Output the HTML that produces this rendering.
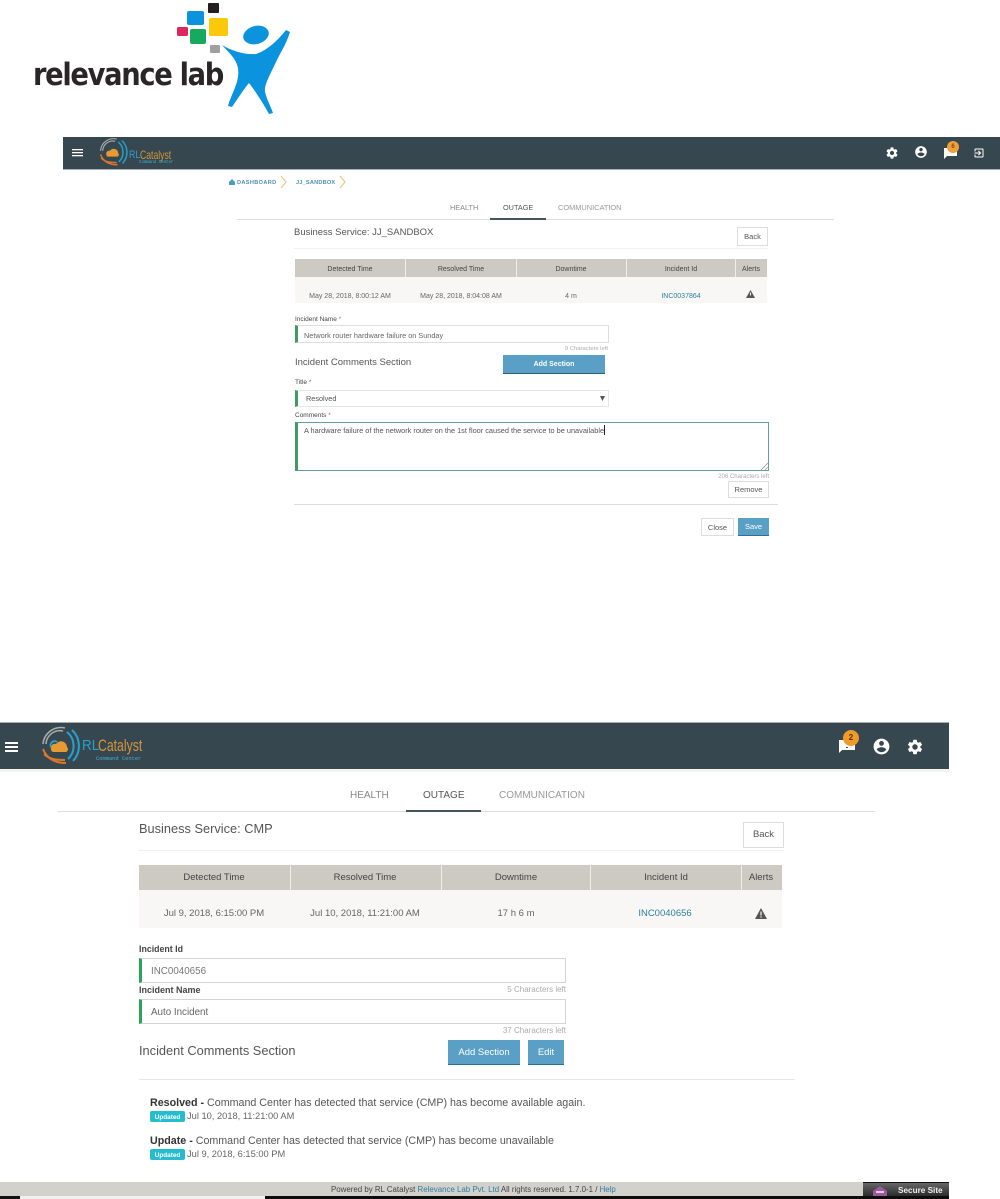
<!DOCTYPE html>
<html lang="en">
<head>
<meta charset="utf-8">
<title>RL Catalyst Outage</title>
<style>
html,body{margin:0;padding:0;background:#fff}
body{position:relative;width:1000px;height:1199px;overflow:hidden;font-family:"Liberation Sans",sans-serif;color:#555;filter:blur(.3px)}
.b{position:absolute;box-sizing:border-box}
.t{position:absolute;white-space:nowrap;line-height:0;margin-top:4px}
.c{transform:translateX(-50%)}
svg{position:absolute;overflow:visible}
.btn{position:absolute;box-sizing:border-box;background:#fff;border:1px solid #ddd;text-align:center;color:#555}
.pri{position:absolute;box-sizing:border-box;background:#5a9fc5;color:#fff;text-align:center;border-bottom:1px solid #2f6f92}
b{font-weight:bold}
</style>
</head>
<body>
<svg width="1000" height="130" style="left:0;top:0" viewBox="0 0 1000 130">
<rect x="208" y="3" width="11" height="10" rx="1" fill="#231f20"/>
<rect x="187" y="11" width="17" height="14" rx="2" fill="#0b93de"/>
<rect x="209" y="18" width="19" height="18" rx="2" fill="#fcc80a"/>
<rect x="177" y="27" width="11" height="9" rx="1.5" fill="#e0265f"/>
<rect x="190" y="29" width="16" height="15" rx="2" fill="#17aa5e"/>
<rect x="210" y="45" width="10" height="8" rx="1" fill="#a0a0a0"/>
<ellipse cx="256" cy="35" rx="13" ry="9" transform="rotate(-15 256 35)" fill="#0b93de"/>
<path d="M222 45C232 51 245 55 256 54C268 50 278 40 286 30L290 32C286 45 280 53 276 62C270 75 264 85 265 92C267 100 271 107 273 113L269 114C263 103 256 92 249 83C243 90 237 100 232 107L228 106C232 92 240 82 238 68C236 58 228 52 222 45Z" fill="#0b93de"/>
<text x="33" y="85" font-family="DejaVu Sans" font-weight="bold" font-size="31" letter-spacing="-1.5" textLength="190" lengthAdjust="spacingAndGlyphs" fill="#2a2627">relevance lab</text>
</svg>

<!-- first bar -->
<div class="b" style="left:63px;top:137px;width:937px;height:33px;background:#37474f;border-bottom:1px solid #a8adb0"></div>
<svg width="11" height="8" viewBox="0 0 11 8" style="left:72px;top:148.7px" fill="#fff"><rect y="0" width="11" height="1.3"/><rect y="3" width="11" height="1.3"/><rect y="6" width="11" height="1.3"/></svg>
<svg width="28" height="30" style="left:99px;top:138px" viewBox="0 0 38 40" fill="none">
<path d="M5 17A14 14 0 0 1 22 4" stroke="#a9adb0" stroke-width="1.5"/><path d="M2 17A18 18 0 0 1 24 1" stroke="#a9adb0" stroke-width="1.5"/>
<path d="M26 5A18 18 0 0 1 27 32" stroke="#2b9fcb" stroke-width="2"/><path d="M31 3A22 22 0 0 1 32 34" stroke="#2b9fcb" stroke-width="2"/>
<path d="M2 22C6 32 14 36 25 36" stroke="#d9772d" stroke-width="2"/><path d="M3 27C8 32 14 33 24 33" stroke="#d9772d" stroke-width="2"/>
<path d="M10 22a4 4 0 0 1 5-5a6 6 0 0 1 11 3a3 3 0 0 1-1 5H12a3 3 0 0 1-2-3z" fill="#e69a32"/>
</svg>
<div class="t" style="left:129px;top:151px;font-size:11px;color:#2b9fcb;transform-origin:left;transform:scaleX(.8)">RL</div>
<div class="t" style="left:140px;top:151px;font-size:12px;color:#d3963c;transform-origin:left;transform:scaleX(.72)">Catalyst</div>
<div class="t" style="left:139px;top:159px;font-size:4.1px;color:#3fb0d0;font-family:'Liberation Mono',monospace">Command Center</div>

<svg width="14" height="14" viewBox="0 0 24 24" style="left:885px;top:146px" fill="#fff"><path d="M19.14 12.94c.04-.3.06-.61.06-.94 0-.32-.02-.64-.07-.94l2.03-1.58c.18-.14.23-.41.12-.61l-1.92-3.32c-.12-.22-.37-.29-.59-.22l-2.39.96c-.5-.38-1.03-.7-1.62-.94l-.36-2.54c-.04-.24-.24-.41-.48-.41h-3.84c-.24 0-.43.17-.47.41l-.36 2.54c-.59.24-1.13.57-1.62.94l-2.39-.96c-.22-.08-.47 0-.59.22L2.74 8.87c-.12.21-.08.47.12.61l2.03 1.58c-.05.3-.09.63-.09.94s.02.64.07.94l-2.03 1.58c-.18.14-.23.41-.12.61l1.92 3.32c.12.22.37.29.59.22l2.39-.96c.5.38 1.03.7 1.62.94l.36 2.54c.05.24.24.41.48.41h3.84c.24 0 .44-.17.47-.41l.36-2.54c.59-.24 1.13-.56 1.62-.94l2.39.96c.22.08.47 0 .59-.22l1.92-3.32c.12-.22.07-.47-.12-.61l-2.01-1.58zM12 15.6c-1.98 0-3.6-1.62-3.6-3.6s1.62-3.6 3.6-3.6 3.6 1.62 3.6 3.6-1.62 3.6-3.6 3.6z"/></svg>
<svg width="14" height="14" viewBox="0 0 24 24" style="left:914px;top:145px" fill="#fff"><path d="M12 2C6.48 2 2 6.48 2 12s4.48 10 10 10 10-4.48 10-10S17.52 2 12 2zm0 3c1.66 0 3 1.34 3 3s-1.34 3-3 3-3-1.34-3-3 1.34-3 3-3zm0 14.2c-2.5 0-4.71-1.28-6-3.22.03-1.99 4-3.08 6-3.08 1.99 0 5.97 1.09 6 3.08-1.29 1.94-3.5 3.22-6 3.22z"/></svg>
<svg width="14" height="13" viewBox="0 0 14 13" style="left:944px;top:147px"><path d="M0 1H13V9H3L0 12Z" fill="#fff"/></svg>
<div class="b" style="left:947px;top:141px;width:12px;height:12px;border-radius:50%;background:#f0a03a"></div>
<div class="t c" style="left:953px;top:143px;font-size:6px;color:#7a4a10;font-weight:bold">6</div>
<svg width="12" height="12" viewBox="0 0 24 24" style="left:973px;top:147px" fill="#fff"><path d="M10.09 15.59L11.5 17l5-5-5-5-1.41 1.41L12.67 11H3v2h9.67l-2.58 2.59zM19 3H5c-1.11 0-2 .9-2 2v4h2V5h14v14H5v-4H3v4c0 1.1.89 2 2 2h14c1.1 0 2-.9 2-2V5c0-1.1-.9-2-2-2z"/></svg>

<!-- breadcrumb -->
<svg width="6" height="6" viewBox="0 0 8 8" style="left:229px;top:179px"><path d="M0 4L4 0L8 4V8H0Z" fill="#4b9cc4"/></svg>
<div class="t" style="left:237px;top:179px;font-size:5.6px;font-weight:bold;color:#4b8fb5;letter-spacing:.35px">DASHBOARD</div>
<svg width="7" height="12" viewBox="0 0 7 12" style="left:280px;top:176px" fill="none"><path d="M1 0L6 6L1 12" stroke="#e7c98a" stroke-width="1.2"/></svg>
<div class="t" style="left:296px;top:179px;font-size:5.6px;font-weight:bold;color:#4b8fb5;letter-spacing:.2px">JJ_SANDBOX</div>
<svg width="7" height="12" viewBox="0 0 7 12" style="left:339px;top:176px" fill="none"><path d="M1 0L6 6L1 12" stroke="#e7c98a" stroke-width="1.2"/></svg>

<!-- tabs 1 -->
<div class="t" style="left:450px;top:204px;font-size:7.3px;color:#888">HEALTH</div>
<div class="t" style="left:503px;top:204px;font-size:7.3px;color:#555">OUTAGE</div>
<div class="t" style="left:558px;top:204px;font-size:7.4px;color:#999">COMMUNICATION</div>
<div class="b" style="left:237px;top:219px;width:597px;height:1px;background:#ddd"></div>
<div class="b" style="left:490px;top:218px;width:56px;height:2px;background:#46555c"></div>

<div class="t" style="left:294px;top:229px;font-size:9.5px;color:#555">Business Service: JJ_SANDBOX</div>
<div class="btn" style="left:737px;top:227px;width:31px;height:19px;font-size:7.5px;line-height:18px">Back</div>
<div class="b" style="left:294px;top:248px;width:474px;height:1px;background:#f0f0f0"></div>

<div class="b" style="left:295px;top:259px;width:472px;height:18px;background:#cdcac3"></div>
<div class="b" style="left:405px;top:259px;width:1px;height:18px;background:#eee"></div>
<div class="b" style="left:516px;top:259px;width:1px;height:18px;background:#eee"></div>
<div class="b" style="left:626px;top:259px;width:1px;height:18px;background:#eee"></div>
<div class="b" style="left:735px;top:259px;width:1px;height:18px;background:#eee"></div>
<div class="b" style="left:295px;top:277px;width:472px;height:26px;background:#f8f7f5"></div>
<div class="t c" style="left:350px;top:266px;font-size:7px;color:#444">Detected Time</div>
<div class="t c" style="left:461px;top:266px;font-size:7px;color:#444">Resolved Time</div>
<div class="t c" style="left:571px;top:266px;font-size:7px;color:#444">Downtime</div>
<div class="t c" style="left:681px;top:266px;font-size:7px;color:#444">Incident Id</div>
<div class="t c" style="left:751px;top:266px;font-size:7px;color:#444">Alerts</div>
<div class="t c" style="left:350px;top:293px;font-size:7px;color:#666">May 28, 2018, 8:00:12 AM</div>
<div class="t c" style="left:461px;top:293px;font-size:7px;color:#666">May 28, 2018, 8:04:08 AM</div>
<div class="t c" style="left:571px;top:293px;font-size:7px;color:#666">4 m</div>
<div class="t c" style="left:681px;top:293px;font-size:7px;color:#2f7f9f">INC0037864</div>
<svg width="9" height="8" viewBox="0 0 9 8" style="left:746px;top:290px"><path d="M4.5 0L9 8H0Z" fill="#555"/><rect x="4" y="2.5" width="1" height="3" fill="#f8f7f5"/></svg>

<div class="t" style="left:295px;top:316px;font-size:6.5px;color:#444">Incident Name <span style="color:#c55">*</span></div>
<div class="b" style="left:295px;top:325px;width:314px;height:18px;border:1px solid #ddd;border-left:3px solid #3f9a63"></div>
<div class="t" style="left:304px;top:332px;font-size:7.3px;color:#666">Network router hardware failure on Sunday</div>
<div class="t" style="right:392px;top:345px;font-size:5.9px;color:#aaa">9 Characters left</div>
<div class="t" style="left:295px;top:359px;font-size:9.5px;color:#555">Incident Comments Section</div>
<div class="pri" style="left:503px;top:355px;width:102px;height:19px;font-size:7px;line-height:19px;font-weight:bold;border-bottom-color:#2f5f7a">Add Section</div>

<div class="t" style="left:295px;top:379px;font-size:6.5px;color:#444">Title <span style="color:#c55">*</span></div>
<div class="b" style="left:295px;top:390px;width:314px;height:17px;border:1px solid #e5e5e5;border-left:3px solid #3f9a63"></div>
<div class="t" style="left:306px;top:395px;font-size:7.3px;color:#555">Resolved</div>
<svg width="5" height="5" viewBox="0 0 5 5" style="left:600px;top:396px"><path d="M0 0H5L2.5 5Z" fill="#555"/></svg>
<div class="t" style="left:295px;top:412px;font-size:6.5px;color:#444">Comments <span style="color:#c55">*</span></div>
<div class="b" style="left:295px;top:422px;width:474px;height:49px;border:1px solid #5f9f9f;border-left:3px solid #3f9a63"></div>
<div class="t" style="left:304px;top:427px;font-size:7.35px;color:#555">A hardware failure of the network router on the 1st floor caused the service to be unavailable</div>
<div class="b" style="left:604px;top:425px;width:1px;height:10px;background:#222"></div>
<svg width="7" height="7" viewBox="0 0 7 7" style="left:761px;top:463px" fill="none"><path d="M0 7L7 0M4 7L7 4" stroke="#888" stroke-width=".7"/></svg>
<div class="t" style="right:231px;top:473px;font-size:6px;color:#aaa">206 Characters left</div>
<div class="btn" style="left:728px;top:481px;width:41px;height:17px;font-size:7.5px;line-height:16px">Remove</div>
<div class="b" style="left:294px;top:504px;width:484px;height:1px;background:#ddd"></div>
<div class="btn" style="left:701px;top:518px;width:33px;height:18px;font-size:7.5px;line-height:17px">Close</div>
<div class="pri" style="left:738px;top:518px;width:31px;height:18px;font-size:7.5px;line-height:18px">Save</div>

<!-- second bar -->
<div class="b" style="left:0;top:722px;width:949px;height:47px;background:#37474f;border-top:1px solid #a5abae"></div>
<div class="b" style="left:0;top:769px;width:949px;height:3px;background:#f6f4f1"></div>
<div class="b" style="left:5px;top:742px;width:13px;height:1.5px;background:#fff"></div>
<div class="b" style="left:5px;top:746px;width:13px;height:1.5px;background:#fff"></div>
<div class="b" style="left:5px;top:750px;width:13px;height:1.5px;background:#fff"></div>
<svg width="38" height="40" style="left:41px;top:727px" viewBox="0 0 38 40" fill="none">
<path d="M5 17A14 14 0 0 1 22 4" stroke="#a9adb0" stroke-width="1.5"/><path d="M2 17A18 18 0 0 1 24 1" stroke="#a9adb0" stroke-width="1.5"/>
<path d="M26 5A18 18 0 0 1 27 32" stroke="#2b9fcb" stroke-width="2"/><path d="M31 3A22 22 0 0 1 32 34" stroke="#2b9fcb" stroke-width="2"/>
<path d="M2 22C6 32 14 36 25 36" stroke="#d9772d" stroke-width="2"/><path d="M3 27C8 32 14 33 24 33" stroke="#d9772d" stroke-width="2"/>
<path d="M10 22a4 4 0 0 1 5-5a6 6 0 0 1 11 3a3 3 0 0 1-1 5H12a3 3 0 0 1-2-3z" fill="#e69a32"/>
<path d="M10 20a4 4 0 0 1 6-5" stroke="#2b9fcb" stroke-width="2"/>
</svg>
<div class="t" style="left:82px;top:742px;font-size:15px;color:#2b9fcb;transform-origin:left;transform:scaleX(.9)">RL</div>
<div class="t" style="left:98px;top:742px;font-size:17px;color:#d3963c;transform-origin:left;transform:scaleX(.72)">Catalyst</div>
<div class="t" style="left:96px;top:755px;font-size:5.4px;color:#3fb0d0;font-family:'Liberation Mono',monospace">Command Center</div>

<svg width="16" height="15" viewBox="0 0 16 15" style="left:839px;top:739px"><path d="M0 1H16V11H3L0 14Z" fill="#fff"/><rect x="7" y="8" width="2" height="1" fill="#37474f"/></svg>
<div class="b" style="left:843px;top:730px;width:16px;height:16px;border-radius:50%;background:#f09a2a"></div>
<div class="t c" style="left:851px;top:734px;font-size:8px;color:#5a3308;font-weight:bold">2</div>
<svg width="19" height="19" viewBox="0 0 24 24" style="left:871.5px;top:737px" fill="#fff"><path d="M12 2C6.48 2 2 6.48 2 12s4.48 10 10 10 10-4.48 10-10S17.52 2 12 2zm0 3c1.66 0 3 1.34 3 3s-1.34 3-3 3-3-1.34-3-3 1.34-3 3-3zm0 14.2c-2.5 0-4.71-1.28-6-3.22.03-1.99 4-3.08 6-3.08 1.99 0 5.97 1.09 6 3.08-1.29 1.94-3.5 3.22-6 3.22z"/></svg>
<svg width="18" height="18" viewBox="0 0 24 24" style="left:906px;top:737.5px" fill="#fff"><path d="M19.14 12.94c.04-.3.06-.61.06-.94 0-.32-.02-.64-.07-.94l2.03-1.58c.18-.14.23-.41.12-.61l-1.92-3.32c-.12-.22-.37-.29-.59-.22l-2.39.96c-.5-.38-1.03-.7-1.62-.94l-.36-2.54c-.04-.24-.24-.41-.48-.41h-3.84c-.24 0-.43.17-.47.41l-.36 2.54c-.59.24-1.13.57-1.62.94l-2.39-.96c-.22-.08-.47 0-.59.22L2.74 8.87c-.12.21-.08.47.12.61l2.03 1.58c-.05.3-.09.63-.09.94s.02.64.07.94l-2.03 1.58c-.18.14-.23.41-.12.61l1.92 3.32c.12.22.37.29.59.22l2.39-.96c.5.38 1.03.7 1.62.94l.36 2.54c.05.24.24.41.48.41h3.84c.24 0 .44-.17.47-.41l.36-2.54c.59-.24 1.13-.56 1.62-.94l2.39.96c.22.08.47 0 .59-.22l1.92-3.32c.12-.22.07-.47-.12-.61l-2.01-1.58zM12 15.6c-1.98 0-3.6-1.62-3.6-3.6s1.62-3.6 3.6-3.6 3.6 1.62 3.6 3.6-1.62 3.6-3.6 3.6z"/></svg>

<!-- tabs 2 -->
<div class="t" style="left:350px;top:792px;font-size:10px;color:#888">HEALTH</div>
<div class="t" style="left:423px;top:792px;font-size:10px;color:#555">OUTAGE</div>
<div class="t" style="left:499px;top:792px;font-size:10px;color:#999">COMMUNICATION</div>
<div class="b" style="left:58px;top:811px;width:817px;height:1px;background:#ddd"></div>
<div class="b" style="left:406px;top:810px;width:75px;height:2px;background:#46555c"></div>

<div class="t" style="left:139px;top:825px;font-size:12.8px;color:#555">Business Service: CMP</div>
<div class="btn" style="left:743px;top:822px;width:41px;height:26px;font-size:9.5px;line-height:24px">Back</div>
<div class="b" style="left:138px;top:850px;width:646px;height:1px;background:#f0f0f0"></div>

<div class="b" style="left:139px;top:865px;width:643px;height:25px;background:#cdcac3"></div>
<div class="b" style="left:290px;top:865px;width:1px;height:25px;background:#eee"></div>
<div class="b" style="left:441px;top:865px;width:1px;height:25px;background:#eee"></div>
<div class="b" style="left:590px;top:865px;width:1px;height:25px;background:#eee"></div>
<div class="b" style="left:741px;top:865px;width:1px;height:25px;background:#eee"></div>
<div class="b" style="left:139px;top:890px;width:643px;height:38px;background:#f8f7f5"></div>
<div class="t c" style="left:214px;top:874px;font-size:9.5px;color:#444">Detected Time</div>
<div class="t c" style="left:365px;top:874px;font-size:9.5px;color:#444">Resolved Time</div>
<div class="t c" style="left:516px;top:874px;font-size:9.5px;color:#444">Downtime</div>
<div class="t c" style="left:666px;top:874px;font-size:9.5px;color:#444">Incident Id</div>
<div class="t c" style="left:761px;top:874px;font-size:9.5px;color:#444">Alerts</div>
<div class="t c" style="left:214px;top:910px;font-size:9.5px;color:#666">Jul 9, 2018, 6:15:00 PM</div>
<div class="t c" style="left:365px;top:910px;font-size:9.5px;color:#666">Jul 10, 2018, 11:21:00 AM</div>
<div class="t c" style="left:516px;top:910px;font-size:9.5px;color:#666">17 h 6 m</div>
<div class="t c" style="left:665px;top:910px;font-size:9.5px;color:#2f7f9f">INC0040656</div>
<svg width="12" height="11" viewBox="0 0 12 11" style="left:755px;top:908px"><path d="M6 0L12 11H0Z" fill="#555"/><rect x="5.4" y="3.5" width="1.2" height="4" fill="#f8f7f5"/><rect x="5.4" y="8.4" width="1.2" height="1.2" fill="#f8f7f5"/></svg>

<div class="t" style="left:139px;top:945px;font-size:8.8px;color:#444;font-weight:bold">Incident Id</div>
<div class="b" style="left:139px;top:958px;width:427px;height:25px;border:1px solid #d5d5d5;border-left:3.5px solid #2ea25c"></div>
<div class="t" style="left:151px;top:968px;font-size:9.8px;color:#777">INC0040656</div>
<div class="t" style="left:139px;top:986px;font-size:9px;color:#444;font-weight:bold">Incident Name</div>
<div class="t" style="right:434px;top:986px;font-size:8px;color:#aaa">5 Characters left</div>
<div class="b" style="left:139px;top:999px;width:427px;height:25px;border:1px solid #d5d5d5;border-left:3.5px solid #2ea25c"></div>
<div class="t" style="left:151px;top:1009px;font-size:9.8px;color:#666">Auto Incident</div>
<div class="t" style="right:434px;top:1027px;font-size:8px;color:#aaa">37 Characters left</div>
<div class="t" style="left:139px;top:1047px;font-size:12.8px;color:#555">Incident Comments Section</div>
<div class="pri" style="left:448px;top:1040px;width:72px;height:25px;font-size:9.5px;line-height:25px">Add Section</div>
<div class="pri" style="left:528px;top:1040px;width:36px;height:25px;font-size:9.5px;line-height:25px">Edit</div>
<div class="b" style="left:139px;top:1079px;width:656px;height:1px;background:#e6e6e6"></div>

<div class="t" style="left:150px;top:1099px;font-size:10.7px;color:#555"><b style="color:#333">Resolved -</b> Command Center has detected that service (CMP) has become available again.</div>
<div class="b" style="left:150px;top:1111px;width:35px;height:11px;background:#25bcd0;border-radius:2px"></div>
<div class="t c" style="left:167.5px;top:1114px;font-size:6.4px;color:#fff;font-weight:bold">Updated</div>
<div class="t" style="left:187px;top:1112px;font-size:9.3px;color:#666">Jul 10, 2018, 11:21:00 AM</div>
<div class="t" style="left:150px;top:1137px;font-size:10.7px;color:#555"><b style="color:#333">Update -</b> Command Center has detected that service (CMP) has become unavailable</div>
<div class="b" style="left:150px;top:1149px;width:35px;height:11px;background:#25bcd0;border-radius:2px"></div>
<div class="t c" style="left:167.5px;top:1152px;font-size:6.4px;color:#fff;font-weight:bold">Updated</div>
<div class="t" style="left:187px;top:1150px;font-size:9.3px;color:#666">Jul 9, 2018, 6:15:00 PM</div>

<!-- footer -->
<div class="b" style="left:0;top:1182px;width:949px;height:14px;background:#d2d1cb"></div>
<div class="t" style="left:331px;top:1186px;font-size:7.9px;color:#444">Powered by RL Catalyst <span style="color:#2f7fa5">Relevance Lab Pvt. Ltd</span> All rights reserved. 1.7.0-1 / <span style="color:#2f7fa5">Help</span></div>
<div class="b" style="left:863px;top:1182px;width:86px;height:14px;background:linear-gradient(#666,#2b2b2b);border-top:1px solid #111"></div>
<svg width="14" height="11" viewBox="0 0 14 11" style="left:873px;top:1186px"><path d="M0 11V5L7 0L14 5V11Z" fill="#9b5a9b"/><rect x="3" y="5" width="8" height="2" fill="#e5c8e5"/></svg>
<div class="t" style="left:898px;top:1187px;font-size:8.2px;color:#eee;font-weight:bold">Secure Site</div>
<div class="b" style="left:0;top:1196px;width:20px;height:3px;background:#111"></div>
<div class="b" style="left:20px;top:1196px;width:245px;height:3px;background:#f0f0f0"></div>
<div class="b" style="left:265px;top:1196px;width:684px;height:3px;background:#0d0d0d"></div>
</body>
</html>
